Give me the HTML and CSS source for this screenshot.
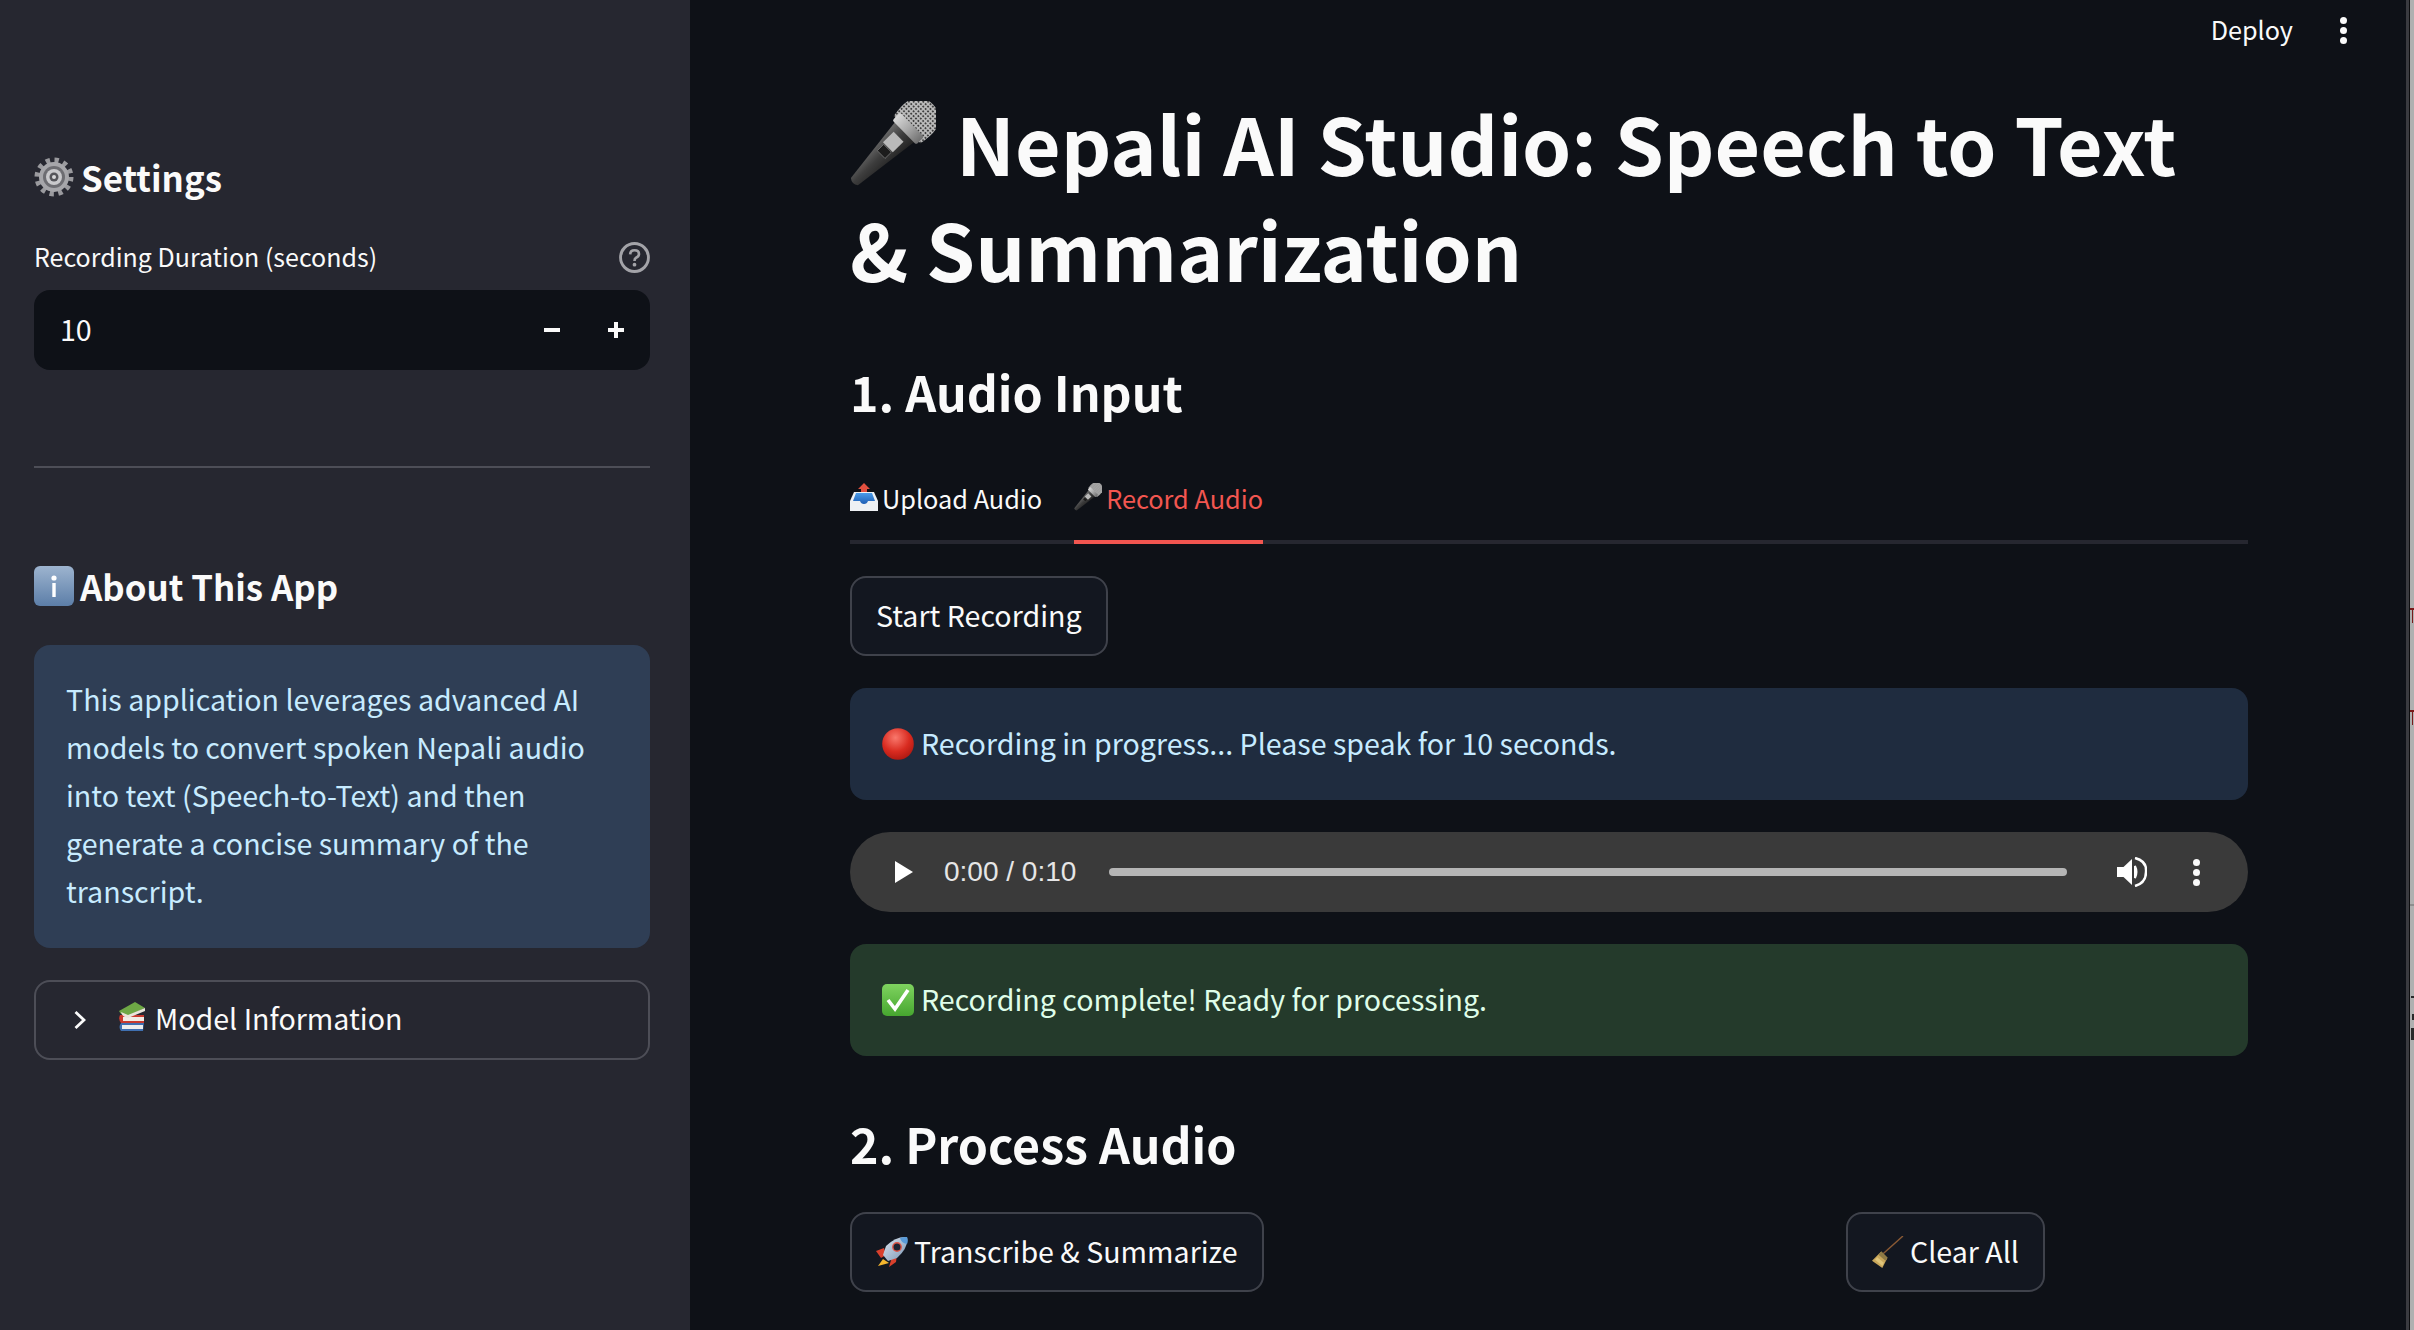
FILE: index.html
```html
<!DOCTYPE html>
<html lang="en">
<head>
<meta charset="utf-8">
<title>Nepali AI Studio</title>
<link rel="stylesheet" href="styles.css">
</head>
<body>
<svg class="defs" width="0" height="0" aria-hidden="true">
  <defs>
    <linearGradient id="gBody" x1="0" y1="0" x2="0" y2="1"><stop offset="0" stop-color="#6b6b6b"/><stop offset=".5" stop-color="#3d3d3d"/><stop offset="1" stop-color="#232323"/></linearGradient>
    <linearGradient id="gCollar" x1="0" y1="0" x2="0" y2="1"><stop offset="0" stop-color="#d8d8d8"/><stop offset=".5" stop-color="#a9a9a9"/><stop offset="1" stop-color="#6f6f6f"/></linearGradient>
    <pattern id="pMesh" width="3.4" height="3.4" patternUnits="userSpaceOnUse"><rect width="3.4" height="3.4" fill="#bdbdbd"/><circle cx="1.7" cy="1.7" r="1" fill="#3c3c3c"/></pattern>
    <linearGradient id="gInfo" x1="0" y1="0" x2="0" y2="1"><stop offset="0" stop-color="#9db4cf"/><stop offset="1" stop-color="#5c7ea8"/></linearGradient>
    <radialGradient id="gRed" cx=".42" cy=".3" r=".8"><stop offset="0" stop-color="#f9786c"/><stop offset=".55" stop-color="#d92b20"/><stop offset="1" stop-color="#a3140e"/></radialGradient>
    <linearGradient id="gGreen" x1="0" y1="0" x2="0" y2="1"><stop offset="0" stop-color="#7fd35f"/><stop offset="1" stop-color="#46a62f"/></linearGradient>
    <linearGradient id="gTray" x1="0" y1="0" x2="0" y2="1"><stop offset="0" stop-color="#4a9be8"/><stop offset="1" stop-color="#1f5fb5"/></linearGradient>
    <linearGradient id="gRocket" x1="0" y1="0" x2="1" y2="1"><stop offset="0" stop-color="#dce6f0"/><stop offset="1" stop-color="#7b95b3"/></linearGradient>
    <symbol id="i-mic" viewBox="0 0 86 85">
      <g transform="translate(3 82) rotate(-44.6)">
        <path d="M2-5 74-14V14L2 5Q-2 0 2-5Z" fill="url(#gBody)"/>
        <rect x="50" y="-8" width="15" height="14" fill="#b9b9b9"/>
        <rect x="40" y="-6" width="9" height="11" fill="#1c1c1c" stroke="#777" stroke-width=".8"/>
        <path d="M76-19Q112-26 112 0 112 26 76 19Z" fill="url(#pMesh)"/>
        <rect x="72" y="-17" width="11" height="34" rx="2" fill="url(#gCollar)"/>
      </g>
    </symbol>
    <symbol id="i-gear" viewBox="0 0 40 40">
      <circle cx="20" cy="20" r="16.500" fill="none" stroke="#9a9a9e" stroke-width="6" stroke-dasharray="4.200 4.440"/>
      <circle cx="20" cy="20" r="15" fill="#a6a6aa"/>
      <circle cx="20" cy="20" r="11" fill="#6d6d72"/>
      <circle cx="20" cy="20" r="8" fill="#c9c9cc"/>
      <circle cx="20" cy="20" r="4.500" fill="#55555a"/>
      <circle cx="20" cy="20" r="2" fill="#d8d8da"/>
    </symbol>
    <symbol id="i-info" viewBox="0 0 40 40">
      <rect width="40" height="40" rx="6" fill="url(#gInfo)"/>
      <circle cx="20" cy="12" r="2.600" fill="#fff"/>
      <rect x="18.300" y="17" width="3.400" height="14" fill="#fff"/>
    </symbol>
    <symbol id="i-books" viewBox="0 0 28 30">
      <path d="M3 21H26L25 29H3Q0 25 3 21Z" fill="#3f6fb0"/>
      <path d="M4 23H25V27H4Z" fill="#eee"/>
      <path d="M2 13H26V21H3Q0 17 2 13Z" fill="#c93a2e"/>
      <path d="M5 15H26V19H5Z" fill="#f1ece4"/>
      <path d="M1 9 17 0 27 6 10 14Q3 14 1 9Z" fill="#6ea845"/>
      <path d="M3 10 10 13 27 6V9L10 16Q4 15 3 10Z" fill="#e9e4da"/>
    </symbol>
    <symbol id="i-inbox" viewBox="0 0 28 28">
      <path d="M14 0 20 6H17V13H11V6H8Z" fill="#e2503f"/>
      <path d="M4 9H24L28 18V28H0V18Z" fill="#eef1f4"/>
      <path d="M6 10H22L25 18H18Q17 21 14 21 11 21 10 18H3Z" fill="url(#gTray)"/>
    </symbol>
    <symbol id="i-red" viewBox="0 0 32 32"><circle cx="16" cy="16" r="15.800" fill="url(#gRed)"/></symbol>
    <symbol id="i-check" viewBox="0 0 32 32">
      <rect width="32" height="32" rx="5" fill="url(#gGreen)"/>
      <path d="M6 16 13 25 26 6" fill="none" stroke="#fff" stroke-width="3.600"/>
    </symbol>
    <symbol id="i-rocket" viewBox="0 0 32 30">
      <path d="M7 22 2 29 13 26Z" fill="#f5b62e"/>
      <path d="M8 11 0 14 5 21 10 18Z" fill="#d9402c"/>
      <path d="M16 20 13 30 20 25 21 17Z" fill="#d9402c"/>
      <path d="M31 0Q33 10 21 21L12 24 7 18 10 9Q20-1 31 0Z" fill="url(#gRocket)"/>
      <circle cx="21" cy="10" r="4.200" fill="#1d2433" stroke="#e0584a" stroke-width="1.400"/>
      <path d="M31 0Q32.500 4 31 7 25 6 24 1Q28-.5 31 0Z" fill="#5a9bd8"/>
    </symbol>
    <symbol id="i-broom" viewBox="0 0 31 31">
      <path d="M30 0 11 17" stroke="#8a5a34" stroke-width="1.400" fill="none"/>
      <path d="M9 15 15 21 10 31 0 24Z" fill="#c9a75a"/>
      <path d="M9 15 15 21 13 24 6 18Z" fill="#8f7a45"/>
      <path d="M3 23 10 29 11.500 26 5 20.500Z" fill="#e0c57a"/>
    </symbol>
  </defs>
</svg>
<div class="app">
  <aside class="sidebar">
    <h3 class="side-title settings"><svg class="emoji e-side"><use href="#i-gear"/></svg>Settings</h3>
    <div class="label-row">
      <span>Recording Duration (seconds)</span>
      <svg class="help" viewBox="0 0 30 30"><circle cx="15" cy="15" r="13.500" fill="none" stroke="#a3a3a8" stroke-width="2.800"/><path d="M10.800 12Q11 8 15 8 19.300 8 19.300 11.500 19.300 14 16.500 15.300 15 16 15 18.500" fill="none" stroke="#a3a3a8" stroke-width="2.600"/><circle cx="15" cy="22" r="1.800" fill="#a3a3a8"/></svg>
    </div>
    <div class="number-input">
      <span class="num-value">10</span>
      <span class="stepper"><i class="minus"></i><i class="plus"></i></span>
    </div>
    <hr class="divider">
    <h3 class="side-title about"><svg class="emoji e-side"><use href="#i-info"/></svg>About This App</h3>
    <div class="side-info">This application leverages advanced AI models to convert spoken Nepali audio into text (Speech-to-Text) and then generate a concise summary of the transcript.</div>
    <div class="expander">
      <svg class="chevron" viewBox="0 0 12 20"><path d="M1.500 2 10 10 1.500 18" fill="none" stroke="#fafafa" stroke-width="2.800"/></svg>
      <svg class="emoji e-books"><use href="#i-books"/></svg>
      <span class="exp-label">Model Information</span>
    </div>
  </aside>

  <main class="main">
    <header class="topbar">
      <span class="deploy">Deploy</span>
      <span class="kebab top-kebab"><i></i><i></i><i></i></span>
    </header>
    <div class="content">
      <h1 class="title"><svg class="emoji e-title"><use href="#i-mic"/></svg>Nepali AI Studio: Speech to Text<br>&amp; Summarization</h1>
      <h2 class="section first">1. Audio Input</h2>
      <div class="tabs">
        <div class="tab"><svg class="emoji e-tab"><use href="#i-inbox"/></svg>Upload Audio</div>
        <div class="tab active"><svg class="emoji e-tab"><use href="#i-mic"/></svg>Record Audio</div>
      </div>
      <div class="btn-row"><button class="btn">Start Recording</button></div>
      <div class="alert alert-info"><svg class="emoji e-text"><use href="#i-red"/></svg>Recording in progress... Please speak for 10 seconds.</div>
      <div class="player">
        <svg class="play" viewBox="0 0 18 22"><path d="M0 0 18 11 0 22Z" fill="#fff"/></svg>
        <span class="time">0:00 / 0:10</span>
        <span class="track"></span>
        <svg class="speaker" viewBox="0 0 30 30"><path d="M0 10H6.500L15 2V28L6.500 20H0Z" fill="#fff"/><path d="M18 9Q21 15 18 21Z" fill="none" stroke="#fff" stroke-width="2"/><path d="M18 1Q30 4 29 15 29 26 18 29" fill="none" stroke="#fff" stroke-width="2.500"/></svg>
        <span class="kebab"><i></i><i></i><i></i></span>
      </div>
      <div class="alert alert-success"><svg class="emoji e-text"><use href="#i-check"/></svg>Recording complete! Ready for processing.</div>
      <h2 class="section second">2. Process Audio</h2>
      <div class="actions">
        <div><button class="btn"><svg class="emoji e-text"><use href="#i-rocket"/></svg>Transcribe &amp; Summarize</button></div>
        <div><button class="btn"><svg class="emoji e-text"><use href="#i-broom"/></svg>Clear All</button></div>
      </div>
    </div>
  </main>

  <div class="edge">
    <i class="mark red m1"></i><i class="mark red m2"></i>
    <i class="mark grey m3"></i><i class="mark dark m4"></i><i class="mark dark m5"></i><i class="mark dark m6"></i>
  </div>
</div>
</body>
</html>
```
FILE: styles.css
```css
* { box-sizing: border-box; }
html, body { margin: 0; height: 1330px; overflow: hidden; background: #0e1117; }
body {
  font-family: "Noto Sans CJK SC", "Source Sans Pro", "Noto Sans", sans-serif;
  font-size: 28.6px;
  line-height: 51px;
  color: #fafafa;
}
.defs { position: absolute; }
.app { display: flex; height: 1330px; }

.sidebar { flex: 0 0 690px; background: #262730; padding: 0 40px 0 34px; }
.side-title { margin: 0; font-size: 34.8px; line-height: 50px; font-weight: 700; display: flex; align-items: center; }
.settings { margin-top: 152px; }
.about { margin-top: 93px; }
.emoji { flex: none; display: inline-block; }
.e-side { width: 40px; height: 40px; margin-right: 6px; }
.settings .e-side { margin-right: 7px; }
.label-row { display: flex; justify-content: space-between; align-items: center; margin-top: 32px; height: 44px; font-size: 25px; }
.help { width: 31px; height: 31px; margin-top: 3px; }
.number-input { margin-top: 12px; height: 80px; border-radius: 16px; background: #0e1117; display: flex; align-items: center; justify-content: space-between; padding: 0 26px; }
.num-value { padding-bottom: 3px; }
.stepper { display: flex; gap: 48px; }
.stepper i { position: relative; display: block; width: 16px; height: 16px; }
.stepper i::before { content: ""; position: absolute; left: 0; right: 0; top: 6px; height: 4px; background: #fafafa; }
.plus::after { content: ""; position: absolute; top: 0; bottom: 0; left: 6px; width: 4px; background: #fafafa; }
.divider { margin: 96px 0 0; border: 0; height: 2px; background: #4d4e57; }
.side-info { margin-top: 34px; padding: 30px 32px 33px; background: #2f3e55; color: #c7ebff; border-radius: 16px; font-size: 28.6px; line-height: 48px; }
.expander { margin-top: 32px; height: 80px; border: 2px solid #4d4e57; border-radius: 16px; display: flex; align-items: center; padding-left: 38px; font-size: 28.6px; }
.exp-label { padding-bottom: 6px; }
.chevron { width: 12px; height: 20px; margin-right: 32px; }
.e-books { width: 28px; height: 30px; margin-right: 9px; margin-top: -6px; }

.main { flex: 1 1 auto; min-width: 0; }
.topbar { height: 60px; display: flex; align-items: center; justify-content: flex-end; padding-right: 59px; font-size: 25.2px; gap: 47px; }
.deploy { padding-bottom: 2px; }
.kebab { display: flex; flex-direction: column; gap: 3px; }
.kebab i { display: block; width: 7px; height: 7px; border-radius: 50%; background: #fafafa; }
.content { padding: 30px 158px 0 160px; }
.title { margin: 0; font-size: 78.7px; line-height: 105.6px; font-weight: 700; }
.e-title { width: 86px; height: 85px; margin-right: 20px; vertical-align: -10px; }
.section { margin: 0; font-size: 48.3px; line-height: 70px; font-weight: 700; }
.first { margin-top: 55px; }
.second { margin-top: 52px; }
.tabs { margin-top: 38px; display: flex; gap: 32px; border-bottom: 4px solid #262730; height: 80px; font-size: 25.3px; }
.tab { height: 80px; display: flex; align-items: center; padding-bottom: 8px; border-bottom: 4px solid transparent; }
.tab.active { color: #f25650; border-bottom-color: #f25650; }
.e-tab { width: 28px; height: 28px; margin-right: 4px; margin-top: -3px; }
.btn-row { margin-top: 32px; }
.btn { font: inherit; color: #fafafa; height: 80px; padding: 0 24px 4px; border: 2px solid #3f424b; border-radius: 16px; background: #131720; display: inline-flex; align-items: center; }
.e-text { width: 32px; height: 32px; margin-right: 6px; }
.btn .e-text { margin-top: 4px; }
.alert { height: 112px; border-radius: 16px; padding: 0 32px 4px; display: flex; align-items: center; }
.alert .e-text { margin-top: 4px; margin-right: 7px; }
.alert-info { margin-top: 32px; background: #1f2c3f; color: #c7ebff; }
.alert-success { margin-top: 32px; background: #243a2b; color: #dffde9; }
.player { margin-top: 32px; height: 80px; border-radius: 40px; background: #3a3a3a; display: flex; align-items: center; padding-left: 45px; font-family: "Liberation Sans", Arial, sans-serif; }
.play { width: 18px; height: 22px; }
.time { margin-left: 31px; width: 132px; font-size: 28px; line-height: 30px; color: #e6e6e6; white-space: nowrap; }
.track { margin-left: 33px; width: 958px; height: 8px; border-radius: 4px; background: #b5b5b5; }
.speaker { margin-left: 50px; width: 30px; height: 30px; }
.player .kebab { margin-left: 46px; }
.actions { margin-top: 34px; display: grid; grid-template-columns: 964px 1fr; gap: 32px; }

.edge { flex: 0 0 8px; position: relative; border-left: 3px solid #3a3b40; background: #b0b0b0; box-shadow: inset 1px 0 0 #0e0e10; }
.mark { position: absolute; display: block; }
.red { left: 1px; width: 4px; height: 15px; border-top: 2px solid #7a1a1a; background: linear-gradient(to right, transparent 2px, #7a1a1a 2px, #7a1a1a 3px, transparent 3px); }
.m1 { top: 608px; }
.m2 { top: 710px; }
.grey { left: 1px; right: 0; top: 904px; height: 2px; background: #8e8e8e; }
.dark { left: 2px; right: 0; background: #2a2a2a; }
.m4 { top: 996px; height: 2px; }
.m5 { top: 1014px; height: 6px; left: 3px; }
.m6 { top: 1028px; height: 12px; left: 2px; }
```
